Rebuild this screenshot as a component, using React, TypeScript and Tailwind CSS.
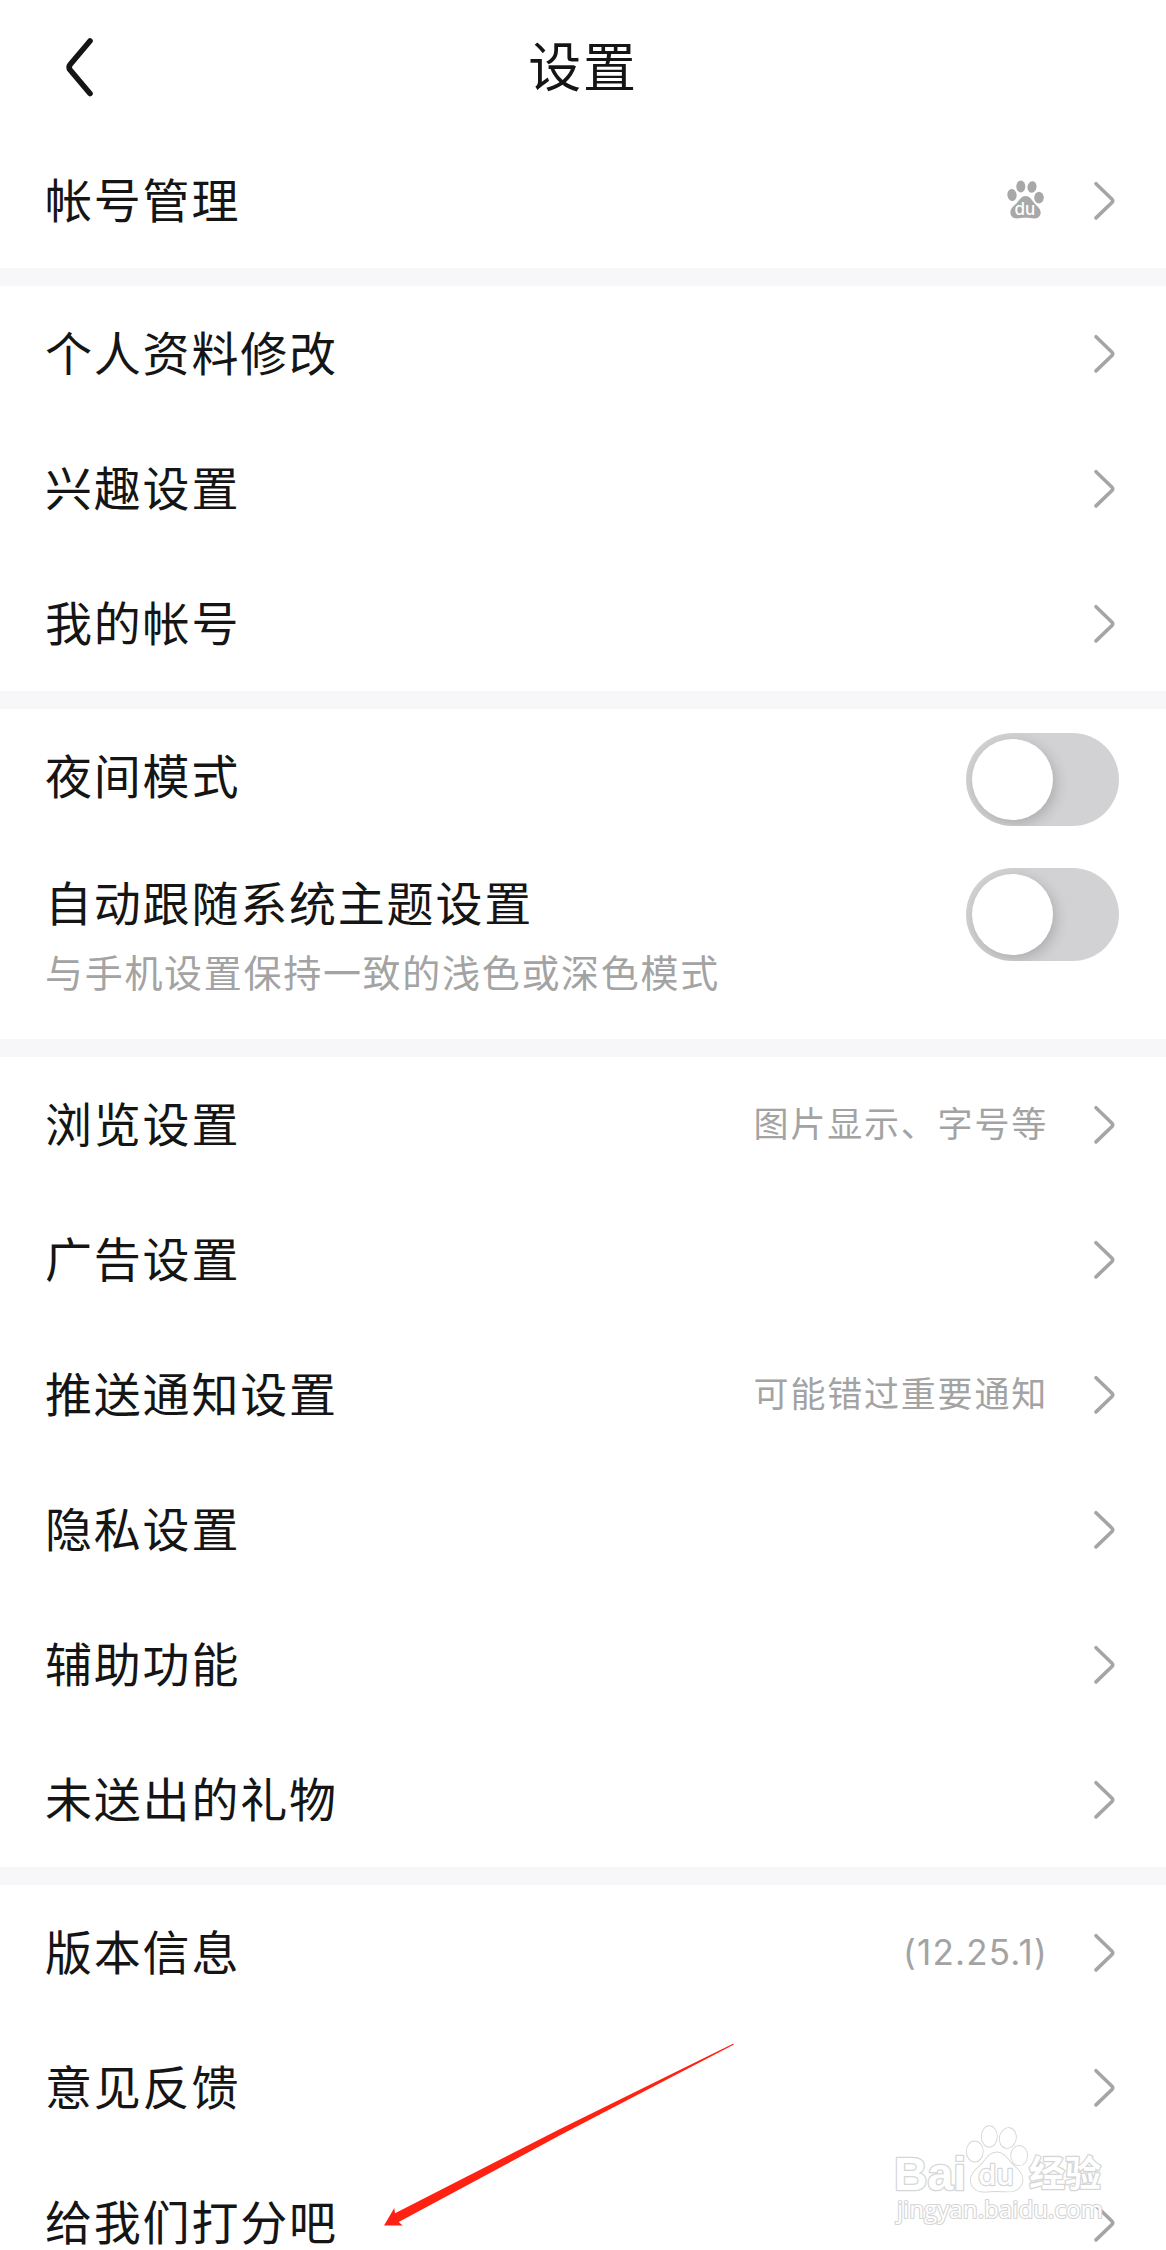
import type { ReactNode } from 'react';

interface SettingItem {
  label: string;
  /** Grey text shown before the chevron */
  value?: string;
  icon?: ReactNode;
}

function Chevron() {
  return (
    <svg width="24" height="42" viewBox="0 0 24 42" fill="none" className="shrink-0">
      <path
        d="M3 3.7 L19 19.2 Q20.6 20.8 19 22.4 L3 37.9"
        stroke="#a5a5a5"
        strokeWidth="3.6"
        strokeLinecap="round"
      />
    </svg>
  );
}

function BaiduIcon() {
  return (
    <svg width="38" height="40" viewBox="0 0 38 40" className="shrink-0 -translate-y-px">
      <g fill="#a8a8a8">
        <ellipse cx="5" cy="15" rx="4.6" ry="6" transform="rotate(-8 5 15)" />
        <ellipse cx="13.8" cy="6.4" rx="4.5" ry="6" />
        <ellipse cx="25" cy="7" rx="4.5" ry="5.8" transform="rotate(12 25 7)" />
        <ellipse cx="32" cy="17.6" rx="4.8" ry="5.8" />
        <path d="M18.5 16 C24 16 25.5 22 29.5 25.5 C33.5 29 34.8 32.5 32.8 35.8 C30 40.4 24 37.8 18.5 37.8 C13 37.8 7.5 40.2 4.4 36 C2 32 4 28 8 24.8 C12 21.6 13.5 16 18.5 16 Z" />
      </g>
      <text
        x="17.8"
        y="34.6"
        textAnchor="middle"
        fill="#fff"
        fontSize="17"
        className="font-['Inter','Liberation_Sans',sans-serif] font-medium"
      >
        du
      </text>
    </svg>
  );
}

const sections: Record<string, SettingItem[]> = {
  account: [{ label: '帐号管理', icon: <BaiduIcon /> }],
  profile: [{ label: '个人资料修改' }, { label: '兴趣设置' }, { label: '我的帐号' }],
  general: [
    { label: '浏览设置', value: '图片显示、字号等' },
    { label: '广告设置' },
    { label: '推送通知设置', value: '可能错过重要通知' },
    { label: '隐私设置' },
    { label: '辅助功能' },
    { label: '未送出的礼物' },
  ],
  about: [
    { label: '版本信息', value: '(12.25.1)' },
    { label: '意见反馈' },
    { label: '给我们打分吧' },
  ],
};

function Label({ children }: { children: ReactNode }) {
  return (
    <span className="block text-[47px] leading-[60px] tracking-[1.8px] whitespace-nowrap">
      {children}
    </span>
  );
}

function Row({ label, value, icon }: SettingItem) {
  return (
    <div className="flex h-[135px] items-center justify-between pr-[49px] pl-[45px]">
      <Label>{label}</Label>
      <div className="flex items-center gap-[48px]">
        {value && (
          <span
            className={`-mr-[3px] text-[35px] leading-none text-[#a3a3a3] ${
              value.startsWith('(') ? 'tracking-[1.2px]' : 'tracking-[1.8px]'
            }`}
          >
            {value}
          </span>
        )}
        {icon}
        <Chevron />
      </div>
    </div>
  );
}

function Section({ items }: { items: SettingItem[] }) {
  return (
    <section>
      {items.map((item) => (
        <Row key={item.label} {...item} />
      ))}
    </section>
  );
}

function Divider() {
  return <div className="h-[18px] bg-[#f7f7f9]" />;
}

function Toggle() {
  return (
    <button
      type="button"
      role="switch"
      aria-checked="false"
      className="h-[93px] w-[153px] shrink-0 overflow-hidden rounded-full bg-[#d2d2d5] p-[6px]"
    >
      <span className="block size-[81px] rounded-full bg-white shadow-[3px_4px_14px_rgba(0,0,0,0.18)]" />
    </button>
  );
}

function Watermark() {
  return (
    <svg
      width="216"
      height="110"
      viewBox="0 0 216 110"
      className="absolute top-[2120px] left-[891px]"
      fill="#fff"
      stroke="#d6d6d6"
      strokeWidth="2.6"
      strokeLinejoin="round"
      paintOrder="stroke"
    >
      <text
        x="3"
        y="70"
        fontSize="46"
        textLength="72"
        lengthAdjust="spacingAndGlyphs"
        className="font-['Liberation_Sans',sans-serif] font-bold"
      >
        Bai
      </text>
      <g strokeWidth="1.8">
        <ellipse cx="83.8" cy="31.5" rx="8" ry="10" />
        <ellipse cx="98.3" cy="16.5" rx="7.6" ry="10.3" />
        <ellipse cx="116.8" cy="18" rx="8" ry="10" transform="rotate(12 116.8 18)" />
        <ellipse cx="128.2" cy="35.6" rx="8" ry="9.6" />
        <path d="M106 32.5 C114 32.5 117 41 123 46 C130 52 134 58 130 65 C125 74 116 71 106 71 C96 71 88 74 82 67 C77 59 81 53 89 46 C95 41 97 32.5 106 32.5 Z" />
      </g>
      <text
        x="105"
        y="65"
        fontSize="29"
        textAnchor="middle"
        strokeWidth="2.4"
        className="font-['Inter','Liberation_Sans',sans-serif] font-medium"
      >
        du
      </text>
      <text
        x="138"
        y="67"
        fontSize="36"
        className="font-['Noto_Sans_CJK_SC',sans-serif] font-bold"
      >
        经验
      </text>
      <text
        x="6"
        y="98"
        fontSize="23"
        textLength="206"
        lengthAdjust="spacingAndGlyphs"
        strokeWidth="2.2"
        className="font-['Open_Sans','Noto_Sans',sans-serif]"
      >
        jingyan.baidu.com
      </text>
    </svg>
  );
}

/** Red pointer aimed at the rating entry */
function Pointer() {
  return (
    <svg
      width="352"
      height="184"
      viewBox="0 0 352 184"
      className="absolute top-[2043px] left-[383px]"
    >
      <path
        d="M1 182.6 L11.3 165 L12 170.3 L177 86 L350 0.7 L351 1.5 L177 92.3 L15.7 179 L19.7 182.6 Z"
        fill="#ff2213"
      />
    </svg>
  );
}

export default function App() {
  return (
    <div className="relative h-[2250px] w-[1166px] overflow-hidden bg-white font-['Inter','Noto_Sans_CJK_SC',sans-serif] text-[#151515]">
      <header className="grid h-[133px] grid-cols-[1fr_auto_1fr] items-center">
        <button type="button" aria-label="返回" className="ml-[62px] w-[36px]">
          <svg width="36" height="64" viewBox="0 0 36 64" fill="none">
            <path
              d="M28 6 L8.2 29.4 Q6 32.2 8.2 35 L28 58.5"
              stroke="#151515"
              strokeWidth="5.6"
              strokeLinecap="round"
            />
          </svg>
        </button>
        <h1 className="pt-[4px] text-[53px] leading-none tracking-[1.8px]">设置</h1>
      </header>

      <Section items={sections.account} />
      <Divider />
      <Section items={sections.profile} />
      <Divider />
      <section>
        <div className="flex h-[135px] items-center justify-between pr-[47px] pl-[45px]">
          <Label>夜间模式</Label>
          <div className="pt-[6px]">
            <Toggle />
          </div>
        </div>
        <div className="flex h-[195px] items-start justify-between pt-[24px] pr-[47px] pl-[45px]">
          <div className="pt-[6px]">
            <Label>自动跟随系统主题设置</Label>
            <p className="mt-[14px] text-[38px] leading-[50px] tracking-[1.7px] text-[#a3a3a3]">
              与手机设置保持一致的浅色或深色模式
            </p>
          </div>
          <Toggle />
        </div>
      </section>
      <Divider />
      <Section items={sections.general} />
      <Divider />
      <Section items={sections.about} />

      <Pointer />
      <Watermark />
    </div>
  );
}
